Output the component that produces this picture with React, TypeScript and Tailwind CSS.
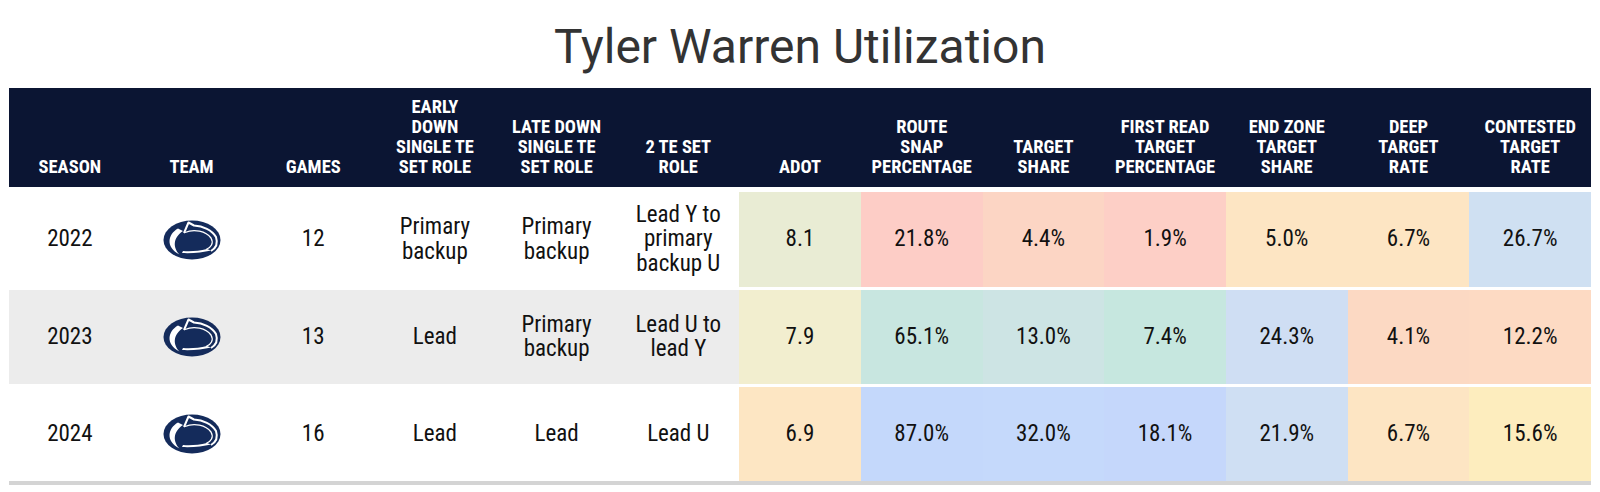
import React from 'react';

type Row = {
  season: string;
  games: string;
  early: string[];
  late: string[];
  twoTe: string[];
  bg: string;
  stats: { value: string; color: string }[];
};

const headers: string[][] = [
  ['SEASON'],
  ['TEAM'],
  ['GAMES'],
  ['EARLY', 'DOWN', 'SINGLE TE', 'SET ROLE'],
  ['LATE DOWN', 'SINGLE TE', 'SET ROLE'],
  ['2 TE SET', 'ROLE'],
  ['ADOT'],
  ['ROUTE', 'SNAP', 'PERCENTAGE'],
  ['TARGET', 'SHARE'],
  ['FIRST READ', 'TARGET', 'PERCENTAGE'],
  ['END ZONE', 'TARGET', 'SHARE'],
  ['DEEP', 'TARGET', 'RATE'],
  ['CONTESTED', 'TARGET', 'RATE'],
];

const rows: Row[] = [
  {
    season: '2022',
    games: '12',
    early: ['Primary', 'backup'],
    late: ['Primary', 'backup'],
    twoTe: ['Lead Y to', 'primary', 'backup U'],
    bg: 'bg-white',
    stats: [
      { value: '8.1', color: 'bg-[#e9ecd4]' },
      { value: '21.8%', color: 'bg-[#fdcdc6]' },
      { value: '4.4%', color: 'bg-[#fcd5c4]' },
      { value: '1.9%', color: 'bg-[#fdcfc6]' },
      { value: '5.0%', color: 'bg-[#fde5c3]' },
      { value: '6.7%', color: 'bg-[#fde5c3]' },
      { value: '26.7%', color: 'bg-[#cfe0f2]' },
    ],
  },
  {
    season: '2023',
    games: '13',
    early: ['Lead'],
    late: ['Primary', 'backup'],
    twoTe: ['Lead U to', 'lead Y'],
    bg: 'bg-[#ececec]',
    stats: [
      { value: '7.9', color: 'bg-[#f2eecf]' },
      { value: '65.1%', color: 'bg-[#c8e6e0]' },
      { value: '13.0%', color: 'bg-[#cde4e4]' },
      { value: '7.4%', color: 'bg-[#c6e7df]' },
      { value: '24.3%', color: 'bg-[#cfdef3]' },
      { value: '4.1%', color: 'bg-[#fcd9c3]' },
      { value: '12.2%', color: 'bg-[#fddac3]' },
    ],
  },
  {
    season: '2024',
    games: '16',
    early: ['Lead'],
    late: ['Lead'],
    twoTe: ['Lead U'],
    bg: 'bg-white',
    stats: [
      { value: '6.9', color: 'bg-[#fde6c3]' },
      { value: '87.0%', color: 'bg-[#c4d8fb]' },
      { value: '32.0%', color: 'bg-[#c5d9fb]' },
      { value: '18.1%', color: 'bg-[#c5d7fb]' },
      { value: '21.9%', color: 'bg-[#cfdff3]' },
      { value: '6.7%', color: 'bg-[#fde5c3]' },
      { value: '15.6%', color: 'bg-[#fdedbe]' },
    ],
  },
];

// Penn State Nittany Lion mark
function LionLogo() {
  return (
    <svg width="58" height="40" viewBox="0 0 58 40">
      <ellipse cx="29" cy="20" rx="28.5" ry="19.5" fill="#142b5b" />
      {/* left crescent */}
      <path d="M15 8.5 C5 14 2 27 16.5 34.5 C10 28 9.5 18 20 11 Z" fill="#ffffff" />
      {/* ear + head outline */}
      <path
        d="M21 13 L25.5 2.5 L31 5.5 C40 6 49 10 53 17 C55 23 53 28 48 31"
        fill="none"
        stroke="#ffffff"
        strokeWidth="2"
        strokeLinejoin="round"
      />
      {/* face line */}
      <path
        d="M22 12.5 C31 8.5 43 11 48 18 C51 23 48 28 43 29.5"
        fill="none"
        stroke="#ffffff"
        strokeWidth="1.3"
      />
      {/* jaw */}
      <path d="M19 33 C29 33.5 40 32.5 48 30.5 L44 29 C36 31 28 31.5 20 31 Z" fill="#ffffff" />
    </svg>
  );
}

function Lines({ lines }: { lines: string[] }) {
  return (
    <span>
      {lines.map((l, i) => (
        <span key={i} className="block whitespace-nowrap">
          {l}
        </span>
      ))}
    </span>
  );
}

export default function App() {
  return (
    <div className="w-full h-[492px] bg-white overflow-hidden font-['Roboto_Condensed',Roboto,sans-serif]">
      {/* Title */}
      <div className="h-[88px] pt-[23px] text-center">
        <h1 className="text-[48px] leading-none text-[#333] font-['Roboto',sans-serif]">
          Tyler Warren Utilization
        </h1>
      </div>

      <div className="px-[9px]">
        {/* Header */}
        <div className="grid grid-cols-13 h-[99px] bg-[#0b1533] text-white">
          {headers.map((h, i) => (
            <div
              key={i}
              className="flex items-end justify-center pb-[10px] text-center text-[18.5px] leading-[20px] font-bold"
            >
              <Lines lines={h} />
            </div>
          ))}
        </div>

        {/* Body */}
        <div className="pt-[2px]">
          {rows.map((r, ri) => (
            <div
              key={r.season}
              className={`grid grid-cols-13 border-t-[3px] border-white text-[23px] leading-[24.5px] text-[#111] ${
                ri === 0 ? 'h-[98px]' : 'h-[97px]'
              }`}
            >
              <div className={`${r.bg} flex items-center justify-center`}>{r.season}</div>
              <div className={`${r.bg} flex items-center justify-center`}>
                <LionLogo />
              </div>
              <div className={`${r.bg} flex items-center justify-center`}>{r.games}</div>
              <div className={`${r.bg} flex items-center justify-center text-center`}>
                <Lines lines={r.early} />
              </div>
              <div className={`${r.bg} flex items-center justify-center text-center`}>
                <Lines lines={r.late} />
              </div>
              <div className={`${r.bg} flex items-center justify-center text-center`}>
                <Lines lines={r.twoTe} />
              </div>
              {r.stats.map((s, si) => (
                <div key={si} className={`${s.color} flex items-center justify-center`}>
                  {s.value}
                </div>
              ))}
            </div>
          ))}
        </div>
        <div className="h-[4px] bg-[#d4d4d4]" />
      </div>
    </div>
  );
}
